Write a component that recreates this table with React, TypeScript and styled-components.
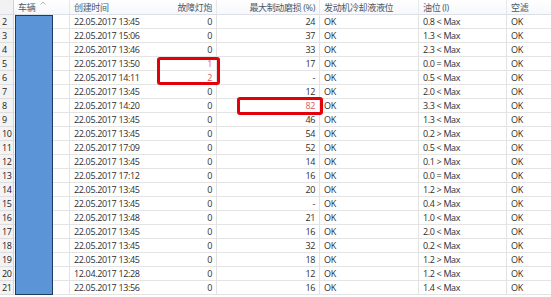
import React from 'react';
import styled, { createGlobalStyle } from 'styled-components';

const GlobalStyle = createGlobalStyle`
	html, body {
		margin: 0;
		padding: 0;
		background: #ffffff;
	}
	body {
		font-family: "Open Sans", "Noto Sans", "Noto Sans CJK SC", sans-serif;
	}
`;

const Sheet = styled.div`
	position: relative;
	width: 551px;
	height: 297px;
	overflow: hidden;
	background: #ffffff;
	font-size: 9px;
	letter-spacing: -0.35px;
	color: #2e2e2e;
`;

const Grid = styled.div`
	display: grid;
	grid-template-columns: 14px 56px 80px 67px 103px 99px 88px 44px;
	grid-auto-rows: 14px;
	grid-template-rows: 15px;
`;

type Align = 'left' | 'right';

const HeadCell = styled.div<{ $align?: Align; $line?: boolean }>`
	position: relative;
	box-sizing: border-box;
	display: flex;
	align-items: center;
	justify-content: ${(p) => (p.$align === 'right' ? 'flex-end' : 'flex-start')};
	padding: 0 4px 0 4px;
	background: linear-gradient(#ffffff, #f6f8fb);
	border-bottom: 1px solid #dcdfe4;
	border-right: ${(p) => (p.$line === false ? 'none' : '1px solid #e6e8eb')};
	color: #4a586b;
	white-space: nowrap;
`;

const CornerCell = styled(HeadCell)`
	background: #f2f2f2;
	border-right: 1px solid #cfd3d8;
`;

const SortMark = styled.svg`
	position: absolute;
	left: 26px;
	top: 1px;
`;

const NumCell = styled.div`
	box-sizing: border-box;
	display: flex;
	align-items: center;
	padding-left: 2px;
	background: #f3f3f3;
	border-right: 1px solid #cfd3d8;
	border-bottom: 1px solid #dedede;
	color: #222;
`;

const Cell = styled.div<{ $align?: Align; $line?: boolean; $alert?: boolean }>`
	box-sizing: border-box;
	display: flex;
	align-items: center;
	justify-content: ${(p) => (p.$align === 'right' ? 'flex-end' : 'flex-start')};
	padding: 0 4px;
	border-bottom: 1px solid #e4e4e4;
	border-right: ${(p) => (p.$line === false ? 'none' : '1px solid #e2e2e2')};
	color: ${(p) => (p.$alert ? '#e4575a' : '#2e2e2e')};
	white-space: nowrap;
`;

const Redaction = styled.div`
	position: absolute;
	left: 15px;
	top: 15px;
	width: 38px;
	height: 280px;
	box-sizing: border-box;
	background: #5b95d8;
	border: 1px solid #1d3a63;
`;

const Highlight = styled.div<{ $x: number; $y: number; $w: number; $h: number }>`
	position: absolute;
	left: ${(p) => p.$x}px;
	top: ${(p) => p.$y}px;
	width: ${(p) => p.$w}px;
	height: ${(p) => p.$h}px;
	box-sizing: border-box;
	border: 3px solid #e3000b;
	border-radius: 3px;
`;

type Row = {
	n: number;
	time: string;
	fault: string;
	brake: string;
	oil: string;
};

const rows: Row[] = [
	{ n: 2, time: '22.05.2017 13:45', fault: '0', brake: '24', oil: '0.8 < Max' },
	{ n: 3, time: '22.05.2017 15:06', fault: '0', brake: '37', oil: '1.3 < Max' },
	{ n: 4, time: '22.05.2017 13:46', fault: '0', brake: '33', oil: '2.3 < Max' },
	{ n: 5, time: '22.05.2017 13:50', fault: '1', brake: '17', oil: '0.0 = Max' },
	{ n: 6, time: '22.05.2017 14:11', fault: '2', brake: '-', oil: '0.5 < Max' },
	{ n: 7, time: '22.05.2017 13:45', fault: '0', brake: '12', oil: '2.0 < Max' },
	{ n: 8, time: '22.05.2017 14:20', fault: '0', brake: '82', oil: '3.3 < Max' },
	{ n: 9, time: '22.05.2017 13:45', fault: '0', brake: '46', oil: '1.3 < Max' },
	{ n: 10, time: '22.05.2017 13:45', fault: '0', brake: '54', oil: '0.2 > Max' },
	{ n: 11, time: '22.05.2017 17:09', fault: '0', brake: '52', oil: '0.5 < Max' },
	{ n: 12, time: '22.05.2017 13:45', fault: '0', brake: '14', oil: '0.1 > Max' },
	{ n: 13, time: '22.05.2017 17:12', fault: '0', brake: '16', oil: '0.0 = Max' },
	{ n: 14, time: '22.05.2017 13:45', fault: '0', brake: '20', oil: '1.2 > Max' },
	{ n: 15, time: '22.05.2017 13:45', fault: '0', brake: '-', oil: '0.4 > Max' },
	{ n: 16, time: '22.05.2017 13:48', fault: '0', brake: '21', oil: '1.0 < Max' },
	{ n: 17, time: '22.05.2017 13:45', fault: '0', brake: '16', oil: '2.0 < Max' },
	{ n: 18, time: '22.05.2017 13:45', fault: '0', brake: '32', oil: '0.2 < Max' },
	{ n: 19, time: '22.05.2017 13:45', fault: '0', brake: '18', oil: '1.2 > Max' },
	{ n: 20, time: '12.04.2017 12:28', fault: '0', brake: '12', oil: '1.2 < Max' },
	{ n: 21, time: '22.05.2017 13:56', fault: '0', brake: '16', oil: '1.4 < Max' },
];

const App = () => (
	<>
		<GlobalStyle />
		<Sheet>
			<Grid>
				<CornerCell />
				<HeadCell>
					车辆
					<SortMark width="6" height="4" viewBox="0 0 6 4">
						<path d="M0.5 3.5 L3 1 L5.5 3.5" fill="none" stroke="#9aa3ad" strokeWidth="0.8" />
					</SortMark>
				</HeadCell>
				<HeadCell $line={false}>创建时间</HeadCell>
				<HeadCell $align="right">故障灯炮</HeadCell>
				<HeadCell $align="right">最大制动磨损 (%)</HeadCell>
				<HeadCell>发动机冷却液液位</HeadCell>
				<HeadCell>油位 (l)</HeadCell>
				<HeadCell $line={false}>空滤</HeadCell>

				{rows.map((r) => (
					<React.Fragment key={r.n}>
						<NumCell>{r.n}</NumCell>
						<Cell />
						<Cell $line={false}>{r.time}</Cell>
						<Cell $align="right" $alert={r.fault !== '0'}>
							{r.fault}
						</Cell>
						<Cell $align="right" $alert={r.brake === '82'}>
							{r.brake}
						</Cell>
						<Cell>OK</Cell>
						<Cell>{r.oil}</Cell>
						<Cell $line={false}>OK</Cell>
					</React.Fragment>
				))}
			</Grid>
			<Redaction />
			<Highlight $x={157} $y={57} $w={63} $h={28} />
			<Highlight $x={237} $y={97} $w={86} $h={18} />
		</Sheet>
	</>
);

export default App;
